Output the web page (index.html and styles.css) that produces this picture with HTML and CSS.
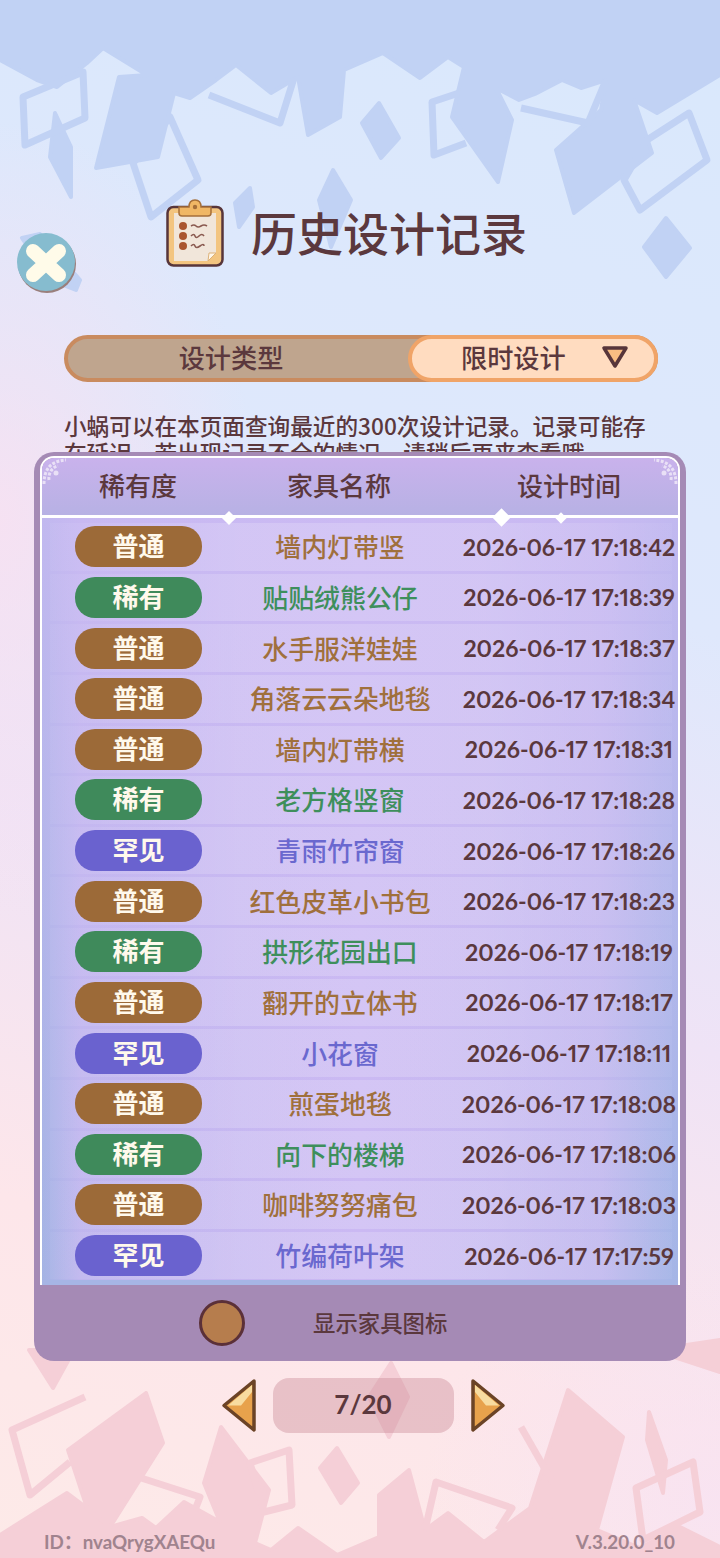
FILE: index.html
```html
<!DOCTYPE html>
<html lang="zh-CN">
<head>
    <meta charset="UTF-8">
    <meta name="viewport" content="width=device-width, initial-scale=1.0">
    <title>历史设计记录</title>
    <link rel="stylesheet" href="styles.css">
</head>
<body>
<!-- background shapes -->
<svg class="backdrop" viewBox="0 0 720 1558" aria-hidden="true">
    <g fill="#c1d2f4" stroke="#c1d2f4" stroke-width="4" stroke-linejoin="round">
        <polygon points="0,0 720,0 720,75 657,113 634,100 652,153 574,213 556,150 601,110 606,80 581,88 562,80 535,94 519,100 496,88 512,120 498,182 452,117 464,67 448,57 420,78 383,53 344,70 340,117 308,135 298,77 271,93 236,65 216,80 190,98 174,93 158,157 96,168 119,77 147,75 103,48 87,63 57,87 37,80 0,60"/>
        <polygon points="55,113 71,147 71,197 50,157"/>
        <polygon points="379,103 399,138 381,158 362,123"/>
        <polygon points="666,218 690,248 666,277 644,247"/>
        <polygon points="333,170 351,200 331,247 319,200"/>
        <polygon points="250,188 253,207 239,227 235,203"/>
        <polygon points="22,238 40,234 80,280 76,290 50,280"/>
    </g>
    <g fill="none" stroke="#c1d2f4" stroke-width="7" stroke-linejoin="round">
        <polygon points="23,97 25,145 85,118 83,72"/>
        <polygon points="133,163 151,217 198,180 170,117"/>
        <polyline points="209,95 280,123 294,78"/>
        <polyline points="459,93 432,102 434,155 466,143"/>
        <polyline points="521,108 588,123 606,80"/>
        <polygon points="624,180 640,210 707,160 689,113 647,140"/>
    </g>
    <g fill="#f5cfd7" stroke="#f5cfd7" stroke-width="4" stroke-linejoin="round">
        <polygon points="0,1558 720,1558 720,1547 680,1527 640,1548 597,1530 623,1437 568,1390 530,1508 551,1517 530,1508 484,1542 448,1513 425,1530 409,1470 379,1495 379,1537 337,1555 298,1528 271,1550 255,1543 269,1490 221,1427 204,1483 220,1522 184,1502 156,1528 142,1518 110,1527 87,1508 67,1493 0,1535"/>
        <polygon points="146,1393 68,1450 87,1508 110,1527 163,1443"/>
        <polygon points="29,1350 53,1388 74,1350"/>
        <polygon points="653,1350 720,1340 720,1372"/>
        <polygon points="391,1363 408,1397 389,1437 369,1397"/>
        <polygon points="337,1448 358,1483 341,1503 320,1468"/>
        <polygon points="649,1412 666,1460 663,1493 647,1440"/>
    </g>
    <g fill="none" stroke="#f5cfd7" stroke-width="7" stroke-linejoin="round">
        <polyline points="85,1397 12,1430 30,1495 70,1462"/>
        <polyline points="138,1477 200,1497 195,1510"/>
        <polygon points="250,1463 289,1450 292,1505 264,1512"/>
        <polyline points="425,1530 436,1482 512,1508 498,1530"/>
        <polyline points="521,1427 553,1483"/>
        <polygon points="636,1488 693,1462 700,1512 643,1540"/>
    </g>
</svg>

<div class="page">
    <!-- close button sits over the page corner -->
    <button class="close-btn" aria-label="关闭">
        <svg viewBox="0 0 60 60" width="60" height="60">
            <ellipse cx="30" cy="31" rx="29" ry="29" fill="#9a7f7c"/>
            <ellipse cx="29" cy="29" rx="29" ry="29" fill="#86bccf"/>
            <path d="M16 18 L42 42 M42 18 L16 42" fill="none" stroke="#fffbe9" stroke-width="14" stroke-linecap="round"/>
        </svg>
    </button>

    <header class="title-row">
        <svg class="title-icon" viewBox="0 0 58 68" width="58" height="68">
            <rect x="1.5" y="8" width="55" height="58.5" rx="6" fill="#f3c580" stroke="#57353a" stroke-width="2.5"/>
            <path d="M8 14 H50 V54 L42 62 H8 Z" fill="#f1e6da"/>
            <path d="M42 62 L43 54 L50 54 Z" fill="#fff7ea" stroke="#dcb27a" stroke-width="1"/>
            <path d="M13 8 H23 C23 2 26 1 29 1 C32 1 35 2 35 8 H45 V14 C45 16 44 17 42 17 H16 C14 17 13 16 13 14 Z" fill="#f0b765" stroke="#a56f3a" stroke-width="1.5"/>
            <circle cx="29" cy="8" r="2.2" fill="#a56f3a"/>
            <circle cx="17" cy="27" r="4" fill="#a9552f"/>
            <circle cx="17" cy="37" r="4" fill="#a9552f"/>
            <circle cx="17" cy="47" r="4" fill="#a9552f"/>
            <path d="M25 27 q3 -2 5 0 t5 0 t6 0" fill="none" stroke="#8a5a50" stroke-width="1.6"/>
            <path d="M25 37 q3 -3 4 0 t4 0 t5 0" fill="none" stroke="#8a5a50" stroke-width="1.6"/>
            <path d="M25 47 q3 -3 4 0 t5 0 t4 0" fill="none" stroke="#8a5a50" stroke-width="1.6"/>
        </svg>
        <h1>历史设计记录</h1>
    </header>

    <div class="type-bar">
        <span class="type-label">设计类型</span>
        <div class="type-select">
            <span>限时设计</span>
            <svg viewBox="0 0 28 24" width="28" height="24">
                <path d="M3 3 H25 L14 21 Z" fill="#f8bd82" stroke="#57353a" stroke-width="3.5" stroke-linejoin="round"/>
            </svg>
        </div>
    </div>

    <p class="notice">小蜗可以在本页面查询最近的300次设计记录。记录可能存在延迟，若出现记录不全的情况，请稍后再来查看哦。</p>

    <section class="panel">
        <div class="panel-frame">
            <div class="table-head">
                <svg class="corner corner-left" viewBox="0 0 28 28" width="28" height="28">
                    <path d="M2 26 C2 12 8 3 24 2 M7 22 C6 16 10 9 16 8" fill="none" stroke="#e9e0f6" stroke-width="3" stroke-dasharray="3 1.5"/>
                    <circle cx="14" cy="15" r="2.5" fill="#e9e0f6"/>
                </svg>
                <svg class="corner corner-right" viewBox="0 0 28 28" width="28" height="28">
                    <path d="M26 26 C26 12 20 3 4 2 M21 22 C22 16 18 9 12 8" fill="none" stroke="#e9e0f6" stroke-width="3" stroke-dasharray="3 1.5"/>
                    <circle cx="14" cy="15" r="2.5" fill="#e9e0f6"/>
                </svg>
                <span>稀有度</span>
                <span>家具名称</span>
                <span>设计时间</span>
                <i class="spark spark-a"></i>
                <i class="spark spark-b"></i>
                <i class="spark spark-c"></i>
            </div>

            <div class="record-list">
                <div class="record common"><span class="pill">普通</span><span class="name">墙内灯带竖</span><span class="time">2026-06-17 17:18:42</span></div>
                <div class="record rare"><span class="pill">稀有</span><span class="name">贴贴绒熊公仔</span><span class="time">2026-06-17 17:18:39</span></div>
                <div class="record common"><span class="pill">普通</span><span class="name">水手服洋娃娃</span><span class="time">2026-06-17 17:18:37</span></div>
                <div class="record common"><span class="pill">普通</span><span class="name">角落云云朵地毯</span><span class="time">2026-06-17 17:18:34</span></div>
                <div class="record common"><span class="pill">普通</span><span class="name">墙内灯带横</span><span class="time">2026-06-17 17:18:31</span></div>
                <div class="record rare"><span class="pill">稀有</span><span class="name">老方格竖窗</span><span class="time">2026-06-17 17:18:28</span></div>
                <div class="record epic"><span class="pill">罕见</span><span class="name">青雨竹帘窗</span><span class="time">2026-06-17 17:18:26</span></div>
                <div class="record common"><span class="pill">普通</span><span class="name">红色皮革小书包</span><span class="time">2026-06-17 17:18:23</span></div>
                <div class="record rare"><span class="pill">稀有</span><span class="name">拱形花园出口</span><span class="time">2026-06-17 17:18:19</span></div>
                <div class="record common"><span class="pill">普通</span><span class="name">翻开的立体书</span><span class="time">2026-06-17 17:18:17</span></div>
                <div class="record epic"><span class="pill">罕见</span><span class="name">小花窗</span><span class="time">2026-06-17 17:18:11</span></div>
                <div class="record common"><span class="pill">普通</span><span class="name">煎蛋地毯</span><span class="time">2026-06-17 17:18:08</span></div>
                <div class="record rare"><span class="pill">稀有</span><span class="name">向下的楼梯</span><span class="time">2026-06-17 17:18:06</span></div>
                <div class="record common"><span class="pill">普通</span><span class="name">咖啡努努痛包</span><span class="time">2026-06-17 17:18:03</span></div>
                <div class="record epic"><span class="pill">罕见</span><span class="name">竹编荷叶架</span><span class="time">2026-06-17 17:17:59</span></div>
            </div>
        </div>

        <div class="panel-foot">
            <i class="toggle"></i>
            <span>显示家具图标</span>
        </div>
    </section>

    <nav class="pager">
        <svg viewBox="0 0 36 55" width="36" height="55">
            <path d="M33 3 L3 27.5 L33 52 Z" fill="#e8a24c" stroke="#6b4326" stroke-width="3.5" stroke-linejoin="round"/>
            <path d="M31 7 L7 27.5 L20 27.5 L31 14 Z" fill="#f8dca0"/>
        </svg>
        <div class="page-num">7/20</div>
        <svg viewBox="0 0 36 55" width="36" height="55">
            <path d="M3 3 L33 27.5 L3 52 Z" fill="#e8a24c" stroke="#6b4326" stroke-width="3.5" stroke-linejoin="round"/>
            <path d="M5 7 L29 27.5 L16 27.5 L5 14 Z" fill="#f8dca0"/>
        </svg>
    </nav>

    <footer class="info-line">
        <span>ID：nvaQrygXAEQu</span>
        <span>V.3.20.0_10</span>
    </footer>
</div>
</body>
</html>
```

FILE: styles.css
```css
* {
    box-sizing: border-box;
}

html, body {
    margin: 0;
    padding: 0;
}

body {
    position: relative;
    width: 720px;
    height: 1558px;
    overflow: hidden;
    font-family: "Noto Sans CJK SC", "Noto Sans", sans-serif;
    color: #5b383d;
    background:
        radial-gradient(ellipse 260px 400px at 0 520px, rgba(250, 224, 240, 0.8), rgba(250, 224, 240, 0)),
        radial-gradient(ellipse 300px 260px at 720px 1500px, rgba(246, 226, 244, 0.7), rgba(246, 226, 244, 0)),
        linear-gradient(200deg, #d9e8fc 0%, #dfe8fc 35%, #efe3f6 58%, #fde6ea 80%, #fdeae8 100%);
}

.backdrop {
    position: absolute;
    top: 0;
    left: 0;
    width: 720px;
    height: 1558px;
}

.page {
    position: relative;
    display: flex;
    flex-direction: column;
    height: 100%;
    padding-top: 199px;
}

.close-btn {
    position: absolute;
    top: 233px;
    left: 17px;
    width: 60px;
    height: 60px;
    padding: 0;
    border: none;
    background: none;
}

.title-row {
    display: flex;
    align-items: center;
    gap: 27px;
    height: 68px;
    padding-left: 166px;
}

.title-row h1 {
    margin: 0 0 4px;
    font-size: 46px;
    font-weight: 500;
    line-height: 64px;
}

/* design type selector */
.type-bar {
    display: flex;
    align-items: center;
    width: 594px;
    height: 47px;
    margin: 68px 0 0 64px;
    border: 4px solid #c98b5f;
    border-radius: 24px;
    background-color: #bfa58e;
}

.type-label {
    width: 326px;
    padding-bottom: 3px;
    font-size: 26.2px;
    font-weight: 500;
    text-align: center;
}

.type-select {
    display: flex;
    align-items: center;
    justify-content: space-between;
    width: 250px;
    height: 47px;
    margin-left: auto;
    margin-right: -4px;
    padding: 0 25px 3px 49px;
    border: 4px solid #f0a468;
    border-radius: 24px;
    background-color: #ffdcc0;
    font-size: 26.2px;
    font-weight: 500;
}

.notice {
    height: 40px;
    margin: 30px 0 0;
    padding: 0 64px;
    overflow: hidden;
    font-size: 22.63px;
    font-weight: 500;
    line-height: 27px;
}

/* records panel */
.panel {
    display: flex;
    flex-direction: column;
    width: 652px;
    height: 909px;
    margin-left: 34px;
    padding-top: 4px;
    border-radius: 20px;
    background-color: #a58ab5;
}

.panel-frame {
    display: flex;
    flex-direction: column;
    height: 829px;
    margin: 0 6px;
    border: 2px solid #ffffff;
    border-bottom: none;
    border-radius: 14px 14px 0 0;
    overflow: hidden;
}

.table-head {
    position: relative;
    display: grid;
    grid-template-columns: 192px 210px 250px;
    align-items: center;
    flex: none;
    height: 60px;
    padding-bottom: 5px;
    border-bottom: 3px solid #ffffff;
    background: linear-gradient(180deg, #c9b2ec 0%, #b7b1e4 100%);
    font-size: 26px;
    font-weight: 500;
    text-align: center;
}

.corner {
    position: absolute;
    top: 0;
}

.corner-left {
    left: 0;
}

.corner-right {
    right: 0;
}

.spark {
    position: absolute;
    bottom: -8px;
    width: 10px;
    height: 10px;
    background-color: #ffffff;
    transform: rotate(45deg);
}

.spark-a {
    left: 182px;
}

.spark-b {
    left: 453px;
    bottom: -9px;
    width: 13px;
    height: 13px;
}

.spark-c {
    left: 515px;
    bottom: -7px;
    width: 8px;
    height: 8px;
}

.record-list {
    display: flex;
    flex-direction: column;
    gap: 3px;
    flex: 1;
    padding: 5px 6px 0 8px;
    background:
        linear-gradient(180deg, rgba(203, 186, 243, 0.75) 0%, rgba(203, 186, 243, 0) 100%),
        linear-gradient(90deg, #a3b3e4 0%, #bfb6ee 6%, #cbb9f3 50%, #c0b8ee 88%, #a3b5e6 100%);
    box-shadow: inset 0 -5px 0 #a6b5e5;
}

.record {
    display: grid;
    grid-template-columns: 177px 226px 232px;
    align-items: center;
    flex: none;
    height: 47.64px;
    background: linear-gradient(90deg, rgba(255, 255, 255, 0.04) 0%, rgba(255, 255, 255, 0.18) 30%, rgba(255, 255, 255, 0.18) 70%, rgba(255, 255, 255, 0.04) 100%);
}

.pill {
    justify-self: center;
    width: 127px;
    height: 41px;
    border-radius: 20px;
    color: #fff9ec;
    font-size: 26px;
    font-weight: 700;
    line-height: 37px;
    text-align: center;
}

.name {
    padding-bottom: 2px;
    font-size: 25.9px;
    font-weight: 500;
    text-align: center;
    white-space: nowrap;
}

.time {
    font-family: Lato, "Noto Sans", sans-serif;
    font-size: 23.1px;
    font-variant-numeric: proportional-nums;
    font-weight: 700;
    text-align: center;
    white-space: nowrap;
}

.common .pill {
    background-color: #9c6a38;
}

.common .name {
    color: #a0703c;
}

.rare .pill {
    background-color: #3f8a5b;
}

.rare .name {
    color: #3e8f5c;
}

.epic .pill {
    background-color: #6a62cf;
}

.epic .name {
    color: #6a68cf;
}

.panel-foot {
    display: flex;
    align-items: center;
    gap: 68px;
    flex: 1;
    padding-left: 165px;
    font-size: 22.4px;
    font-weight: 500;
}

.panel-foot span {
    padding-bottom: 3px;
}

.toggle {
    width: 46px;
    height: 46px;
    border: 3px solid #5b3038;
    border-radius: 50%;
    background-color: #b67d4d;
}

/* page switcher */
.pager {
    display: flex;
    align-items: center;
    justify-content: center;
    gap: 16px;
    height: 55px;
    margin-top: 17px;
    padding-left: 6px;
}

.page-num {
    width: 181px;
    height: 55px;
    border-radius: 16px;
    background-color: rgba(196, 132, 145, 0.38);
    font-family: Lato, "Noto Sans", sans-serif;
    font-size: 26px;
    font-weight: 700;
    line-height: 53px;
    text-align: center;
}

.info-line {
    display: flex;
    justify-content: space-between;
    margin-top: auto;
    padding: 0 45px 3px 44px;
    color: #a0838e;
    font-family: Lato, "Noto Sans CJK SC", sans-serif;
    font-size: 18.8px;
    font-weight: 700;
    line-height: 26px;
}
```
